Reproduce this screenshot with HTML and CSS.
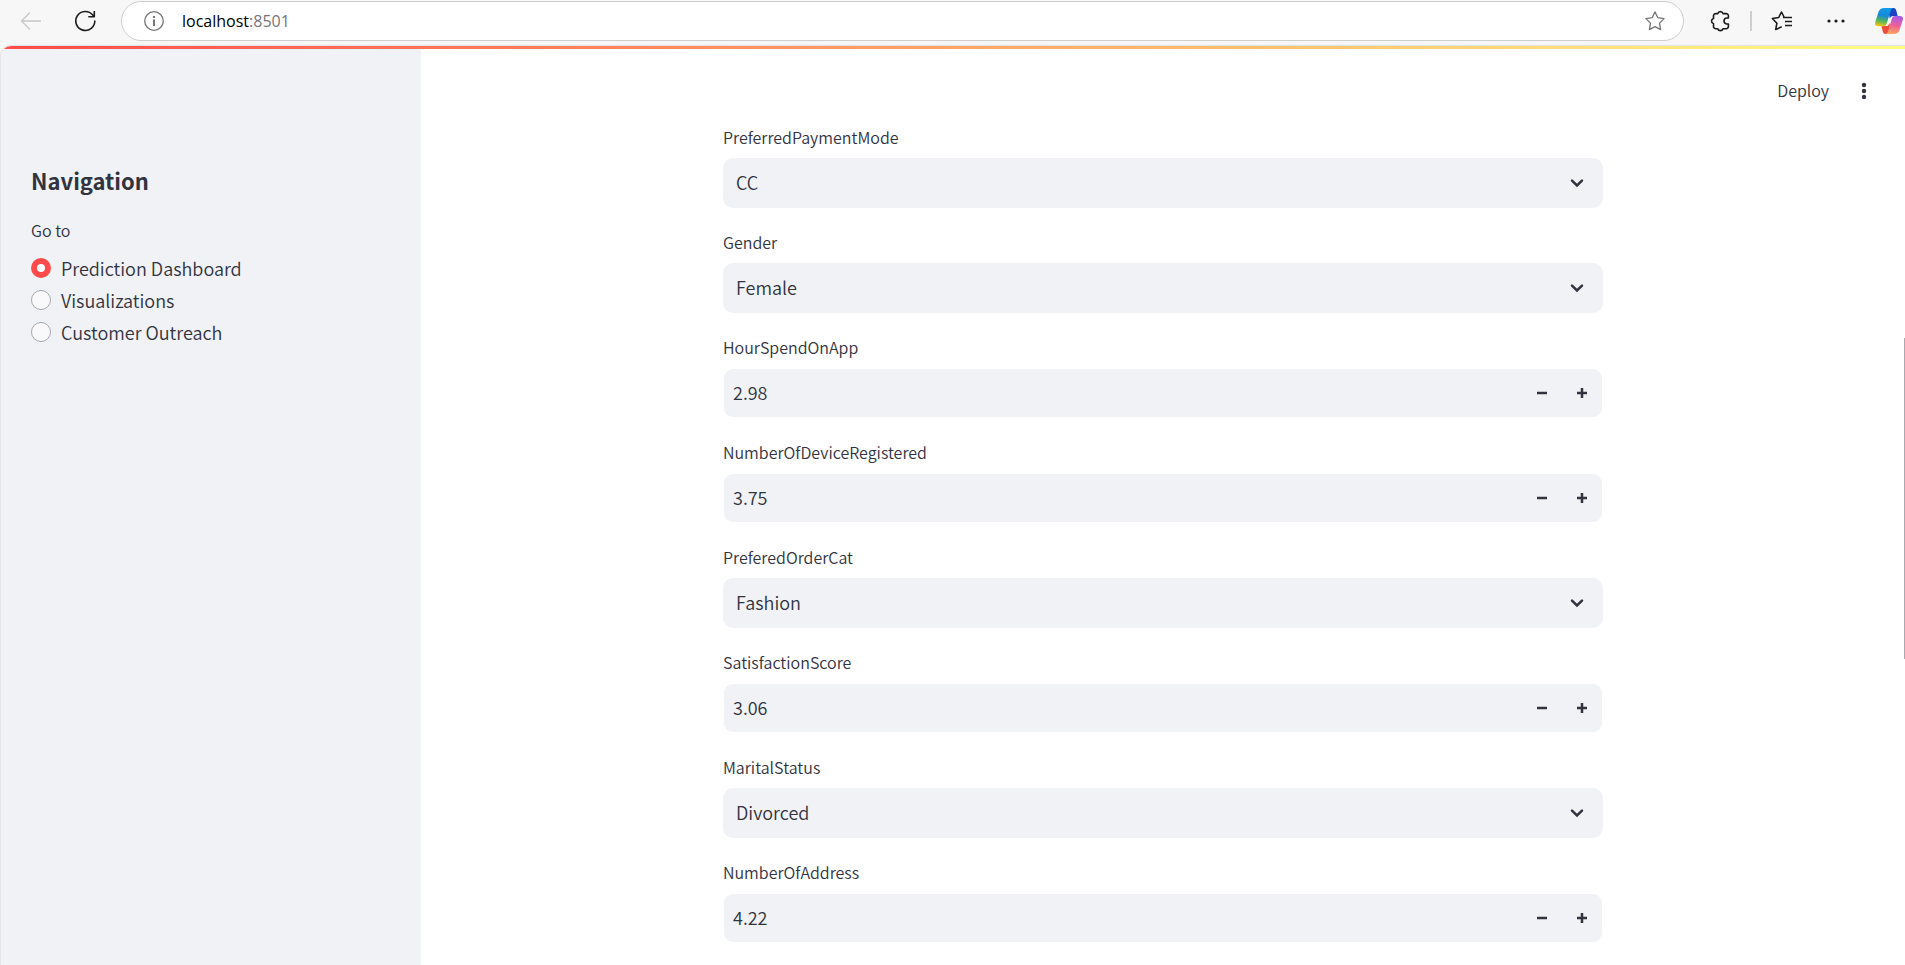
FILE: index.html
```html
<!DOCTYPE html>
<html lang="en">
<head>
<meta charset="utf-8">
<title>Prediction Dashboard</title>
<link rel="stylesheet" href="styles.css">
</head>
<body>
<header class="browser-bar">
  <button class="bar-button back" type="button" aria-label="Back" disabled>
    <svg width="22" height="20" viewBox="0 0 22 20"><path d="M21 10H1.500M10 1.500 1.500 10l8.500 8.500"/></svg>
  </button>
  <button class="bar-button" type="button" aria-label="Refresh">
    <svg width="22" height="22" viewBox="0 0 22 22" class="heavy"><path d="M20.800 10.500A9.500 9.500 0 1 1 18.700 5L20 6.500M20.300 1v5.800h-6"/></svg>
  </button>
  <div class="omnibox">
    <button class="site-info" type="button" aria-label="View site information">
      <svg width="20" height="20" viewBox="0 0 20 20"><circle cx="10" cy="10" r="9.300"/><path d="M10 8.500v6.500M10 5v2" class="thick"/></svg>
    </button>
    <a class="url" href="#"><span class="host">localhost</span>:8501</a>
    <button class="site-info" type="button" aria-label="Add to favorites">
      <svg width="20" height="20" viewBox="0 0 20 20"><path d="M10 .9l2.800 5.800 6.300.9-4.600 4.500 1.100 6.500-5.600-3-5.600 3 1.100-6.500L.9 7.600l6.300-.9z"/></svg>
    </button>
  </div>
  <div class="bar-group">
    <button class="bar-button" type="button" aria-label="Extensions">
      <svg width="20" height="22" viewBox="0 0 20 22" class="heavy"><path d="M5.500 3.600h2.300a2.700 2.700 0 0 1 5.200 0h3.200a2.200 2.200 0 0 1 2.200 2.200V8h-1.400a2.900 2.900 0 0 0 0 6h1.400v2.500a2.200 2.200 0 0 1-2.200 2.200H13a2.700 2.700 0 0 1-5.200 0H5.700a2.200 2.200 0 0 1-2.200-2.200V13.700a2.700 2.700 0 0 1 0-5.200V5.800a2.200 2.200 0 0 1 2.200-2.200"/></svg>
    </button>
    <span class="bar-divider"></span>
    <button class="bar-button" type="button" aria-label="Favorites">
      <svg width="22" height="22" viewBox="0 0 22 22" class="heavy"><path d="M15.500 7.500H13.300L10.500 2 7.700 7.500 1.400 8.500l4.500 4.700-1.200 6.300 6-2.700M12 7.500h9M14 11.500h7M14 15.500h7"/></svg>
    </button>
  </div>
  <button class="bar-button" type="button" aria-label="Settings and more">
    <svg width="18" height="4" viewBox="0 0 18 4" class="dots"><circle cx="2" cy="2" r="1.600"/><circle cx="9" cy="2" r="1.600"/><circle cx="16" cy="2" r="1.600"/></svg>
  </button>
  <button class="copilot" type="button" aria-label="Copilot">
    <svg width="28" height="26" viewBox="0 0 28 26">
      <defs>
        <linearGradient id="c1" x1=".5" y1="0" x2=".3" y2="1"><stop offset="0" stop-color="#139be8"/><stop offset=".4" stop-color="#1489d8"/><stop offset=".7" stop-color="#52b45c"/><stop offset="1" stop-color="#f2c811"/></linearGradient>
        <linearGradient id="c2" x1=".6" y1="0" x2=".4" y2="1"><stop offset="0" stop-color="#a65bea"/><stop offset=".5" stop-color="#ed5e9b"/><stop offset="1" stop-color="#fda55c"/></linearGradient>
      </defs>
      <path fill="#1b45c4" d="M13 0h5.500q2 0 2.700 2.200L22.700 8h-5q-2.300 0-3 2.500z"/>
      <path fill="#f04c3c" d="M6.500 18h6l2.500-3-1 11h-3.500q-2 0-2.600-2z"/>
      <path fill="url(#c1)" d="M9.500 0H18q-1.700.5-2.500 3.300l-3.700 12q-.9 3-3.800 3H3q-3.600 0-2.800-4L3.500 4q1.200-4 6-4z"/>
      <path fill="url(#c2)" d="M20 8h5q3.600 0 2.800 4l-3.300 10q-1.200 4-6 4h-8q1.900-.5 2.700-3.300l3.500-11.500Q17.600 8 20 8z"/>
    </svg>
  </button>
</header>

<div class="page">
  <div class="decoration"></div>
  <aside class="sidebar">
    <h2 class="sidebar-title">Navigation</h2>
    <fieldset class="nav-group">
      <legend class="label">Go to</legend>
      <label class="nav-option"><input type="radio" name="nav" checked>Prediction Dashboard</label>
      <label class="nav-option"><input type="radio" name="nav">Visualizations</label>
      <label class="nav-option"><input type="radio" name="nav">Customer Outreach</label>
    </fieldset>
  </aside>
  <main class="main">
    <div class="app-header">
      <button class="deploy" type="button">Deploy</button>
      <button class="menu" type="button" aria-label="Main menu">
        <svg width="6" height="18" viewBox="0 0 6 18"><circle cx="3" cy="3" r="2.200"/><circle cx="3" cy="9" r="2.200"/><circle cx="3" cy="15" r="2.200"/></svg>
      </button>
    </div>
    <form class="form">
      <div class="field">
        <label class="label" for="payment">PreferredPaymentMode</label>
        <div class="select-box"><select id="payment"><option>CC</option></select><svg class="chevron" width="14" height="10" viewBox="0 0 14 10"><path d="M2 2.700 7 7.500l5-4.800"/></svg></div>
      </div>
      <div class="field">
        <label class="label" for="gender">Gender</label>
        <div class="select-box"><select id="gender"><option>Female</option></select><svg class="chevron" width="14" height="10" viewBox="0 0 14 10"><path d="M2 2.700 7 7.500l5-4.800"/></svg></div>
      </div>
      <div class="field">
        <label class="label" for="hours">HourSpendOnApp</label>
        <div class="number-box"><input id="hours" type="text" inputmode="decimal" value="2.98"><button type="button" aria-label="Decrease"><svg width="10" height="10" viewBox="0 0 10 10"><path d="M0 5h10"/></svg></button><button type="button" aria-label="Increase"><svg width="10" height="10" viewBox="0 0 10 10"><path d="M0 5h10M5 0v10"/></svg></button></div>
      </div>
      <div class="field">
        <label class="label" for="devices">NumberOfDeviceRegistered</label>
        <div class="number-box"><input id="devices" type="text" inputmode="decimal" value="3.75"><button type="button" aria-label="Decrease"><svg width="10" height="10" viewBox="0 0 10 10"><path d="M0 5h10"/></svg></button><button type="button" aria-label="Increase"><svg width="10" height="10" viewBox="0 0 10 10"><path d="M0 5h10M5 0v10"/></svg></button></div>
      </div>
      <div class="field">
        <label class="label" for="category">PreferedOrderCat</label>
        <div class="select-box"><select id="category"><option>Fashion</option></select><svg class="chevron" width="14" height="10" viewBox="0 0 14 10"><path d="M2 2.700 7 7.500l5-4.800"/></svg></div>
      </div>
      <div class="field">
        <label class="label" for="score">SatisfactionScore</label>
        <div class="number-box"><input id="score" type="text" inputmode="decimal" value="3.06"><button type="button" aria-label="Decrease"><svg width="10" height="10" viewBox="0 0 10 10"><path d="M0 5h10"/></svg></button><button type="button" aria-label="Increase"><svg width="10" height="10" viewBox="0 0 10 10"><path d="M0 5h10M5 0v10"/></svg></button></div>
      </div>
      <div class="field">
        <label class="label" for="marital">MaritalStatus</label>
        <div class="select-box"><select id="marital"><option>Divorced</option></select><svg class="chevron" width="14" height="10" viewBox="0 0 14 10"><path d="M2 2.700 7 7.500l5-4.800"/></svg></div>
      </div>
      <div class="field">
        <label class="label" for="address">NumberOfAddress</label>
        <div class="number-box"><input id="address" type="text" inputmode="decimal" value="4.22"><button type="button" aria-label="Decrease"><svg width="10" height="10" viewBox="0 0 10 10"><path d="M0 5h10"/></svg></button><button type="button" aria-label="Increase"><svg width="10" height="10" viewBox="0 0 10 10"><path d="M0 5h10M5 0v10"/></svg></button></div>
      </div>
    </form>
  </main>
  <div class="scroll-thumb"></div>
</div>
</body>
</html>
```
FILE: styles.css
```css
* { box-sizing: border-box; }

body {
  margin: 0;
  min-height: 100vh;
  display: flex;
  flex-direction: column;
  background: #f7f7f7;
  color: #31333f;
  font-family: "Noto Sans CJK SC", "Noto Sans", sans-serif;
  font-size: 18px;
  font-weight: 350;
}

button {
  display: flex;
  align-items: center;
  justify-content: center;
  padding: 0;
  border: 0;
  background: none;
  color: inherit;
  font: inherit;
}

select, input {
  margin: 0;
  border: 0;
  color: inherit;
  font: inherit;
}

/* Browser toolbar */
.browser-bar {
  display: flex;
  align-items: flex-start;
  gap: 18px;
  padding: 1px 2px 5px 13px;
}

.bar-button, .site-info {
  height: 40px;
  color: #1b1b1b;
}

.bar-button { width: 36px; }
.back { color: #c8c8c8; }
.site-info { width: 20px; color: #767676; }

.browser-bar path, .browser-bar circle { stroke-linejoin: round; }
.bar-button svg, .site-info svg {
  fill: none;
  stroke: currentColor;
  stroke-width: 1.3;
}
.bar-button .heavy { stroke-width: 1.6; }
.site-info .thick { stroke-width: 2; }
.bar-button .dots { fill: currentColor; stroke: none; }

.omnibox {
  flex: 1;
  display: flex;
  align-items: center;
  gap: 18px;
  height: 40px;
  padding: 0 18px 0 22px;
  border: 1px solid #cecece;
  border-radius: 20px;
  background: #fff;
}

.url {
  flex: 1;
  color: #767676;
  font-family: "Open Sans", "Noto Sans", sans-serif;
  font-size: 16px;
  font-weight: 400;
  line-height: 24px;
  text-decoration: none;
}
.host { color: #000; }

.bar-group { display: flex; align-items: center; gap: 12px; }
.bar-divider { width: 2px; height: 20px; background: #cecece; }
.copilot { width: 28px; height: 40px; margin-left: 3px; }

/* Application */
.page {
  position: relative;
  flex: 1;
  display: grid;
  grid-template-columns: 420px 1fr;
  grid-template-rows: 3px 1fr;
  overflow: hidden;
  margin-left: 1px;
  border-radius: 10px 0 0 0;
  background: #fff;
  box-shadow: 0 0 1px 1px #e2e2e6;
}

.decoration {
  grid-column: 1 / -1;
  background: linear-gradient(90deg, #ff4b4b, #fffd80);
}

.sidebar {
  padding: 113px 30px 0;
  background: #f0f2f6;
}

.sidebar-title {
  margin: 0;
  font-size: 22px;
  font-weight: 600;
  line-height: 36px;
}

.nav-group {
  display: flex;
  flex-direction: column;
  margin: 18px 0 0;
  padding: 0;
  border: 0;
}

.label {
  display: block;
  padding: 0 0 2px;
  font-size: 16px;
  line-height: 28px;
}

.nav-group .label { margin-bottom: 6px; }

.nav-option {
  display: flex;
  align-items: center;
  gap: 10px;
  line-height: 32px;
}

.nav-option input {
  appearance: none;
  width: 20px;
  height: 20px;
  border: 1px solid #a7a8af;
  border-radius: 50%;
  background: #f9f9fb;
}
.nav-option input:checked {
  border: 6px solid #ff4b4b;
  background: #fff;
}

.app-header {
  display: flex;
  align-items: center;
  justify-content: flex-end;
  gap: 32px;
  height: 74px;
  padding: 10px 38px 0 0;
}
.deploy {
  padding-bottom: 2px;
  font-size: 16px;
  line-height: 28px;
}
.menu { height: 30px; fill: #31333f; }

.form {
  display: flex;
  flex-direction: column;
  gap: 20px;
  max-width: 880px;
  margin: 0 auto;
  padding-bottom: 20px;
}

.field { display: grid; gap: 5px; }

.select-box, .number-box {
  display: flex;
  align-items: center;
  height: 50px;
  border-radius: 10px;
  background: #f0f2f6;
}

.select-box select {
  flex: 1;
  appearance: none;
  height: 50px;
  margin-right: -34px;
  padding: 0 13px 2px;
  background: transparent;
}

.chevron {
  margin-right: 19px;
  fill: none;
  stroke: #31333f;
  stroke-width: 2.5;
  stroke-linecap: round;
  pointer-events: none;
}

.number-box {
  border: 1px solid transparent;
  background-clip: padding-box;
}
.number-box input {
  flex: 1;
  min-width: 0;
  height: 48px;
  padding: 0 9px 2px;
  background: transparent;
}
.number-box button {
  width: 40px;
  height: 48px;
  stroke: #31333f;
  stroke-width: 2.5;
}

.scroll-thumb {
  position: absolute;
  top: 30%;
  right: 0;
  width: 1px;
  height: 35%;
  margin-top: 16px;
  background: #a9a9ae;
}
```
